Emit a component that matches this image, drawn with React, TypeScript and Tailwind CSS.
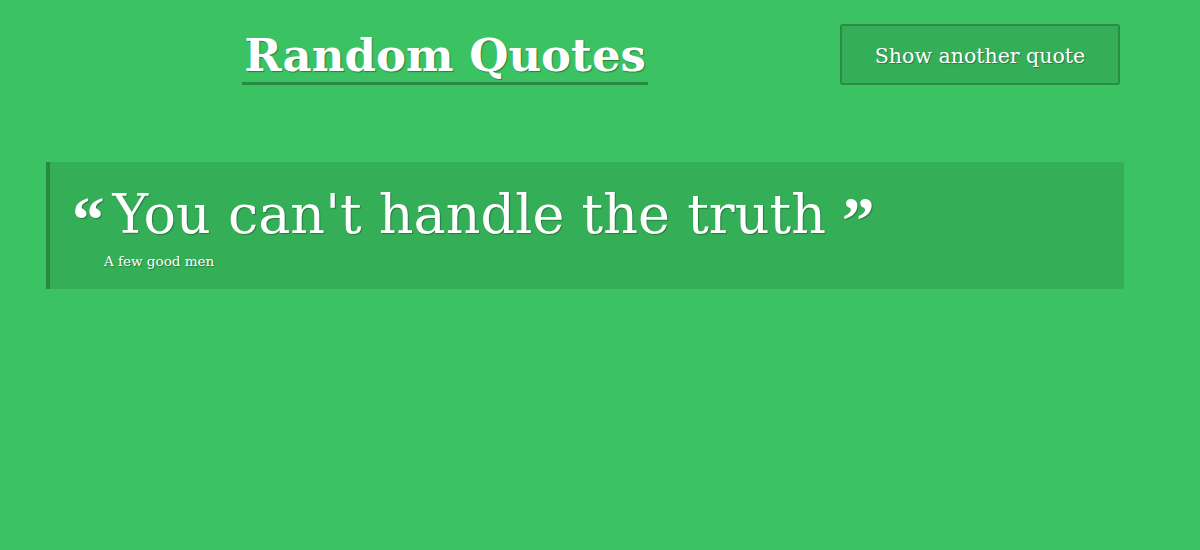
export default function App() {
  return (
    <div className="min-h-[550px] w-full bg-[#3bc262] text-white" style={{ fontFamily: '"DejaVu Serif", "Liberation Serif", serif' }}>
      <header className="flex items-start pt-6">
        <div className="flex w-[890px] justify-center pt-[6px]">
          <h1 className="border-b-[3px] border-[#2a8a44] px-[2px] text-[45px] font-bold leading-[52px] [text-shadow:1px_1px_1px_rgba(0,0,0,0.35)]">
            Random Quotes
          </h1>
        </div>
        <button className="ml-[-50px] h-[61px] w-[280px] rounded-[3px] border-2 border-[#2b8c46] bg-[#35ae58] pt-[3px] text-[20.5px] [text-shadow:1px_1px_1px_rgba(0,0,0,0.3)]">
          Show another quote
        </button>
      </header>

      <div className="ml-[46px] mt-[77px] flex h-[127px] w-[1078px] flex-col rounded-r-[3px] border-l-4 border-[#268a42] bg-[#35ae58] pl-[22px] pt-[25px]">
        <p className="flex items-start text-[54px] leading-[56px] [text-shadow:1px_1px_1px_rgba(0,0,0,0.3)]">
          <span className="mr-[8px] mt-[3px] font-['Liberation_Serif'] text-[65px] font-bold leading-[60px]">“</span>
          <span>You can't handle the truth</span>
          <span className="ml-[16px] mt-[3px] font-['Liberation_Serif'] text-[65px] font-bold leading-[60px]">”</span>
        </p>
        <p className="ml-[32px] mt-[1px] text-[13.5px] [text-shadow:1px_1px_1px_rgba(0,0,0,0.3)]">A few good men</p>
      </div>
    </div>
  );
}
